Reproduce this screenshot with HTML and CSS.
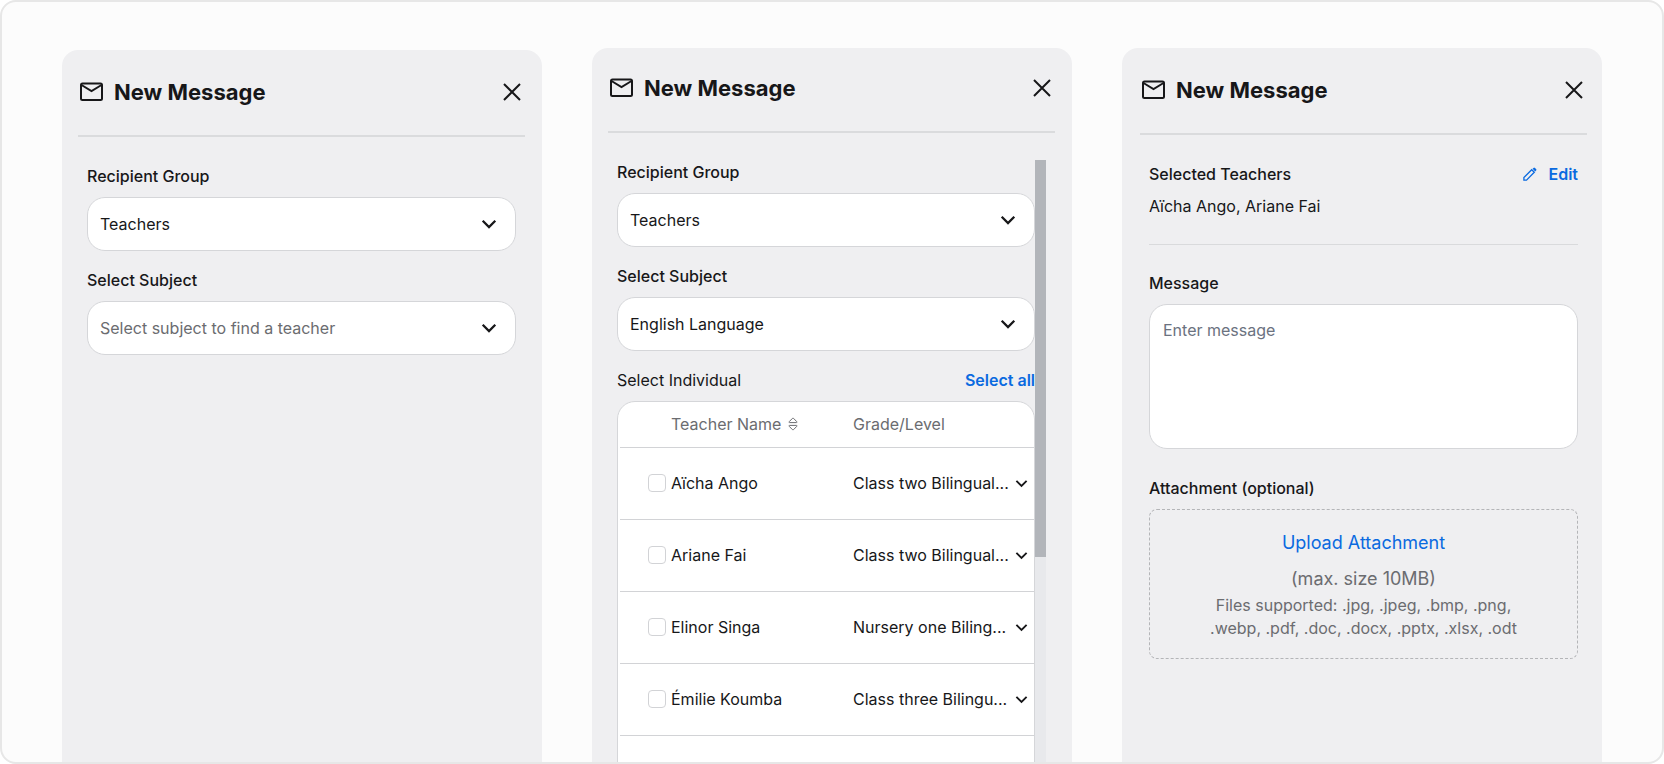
FILE: index.html
```
<!DOCTYPE html>
<html lang="en">
<head>
  <meta charset="UTF-8" />
  <meta name="viewport" content="width=device-width, initial-scale=1.0"/>
  <title>New Message</title>
  <link rel="stylesheet" href="styles.css">
</head>
<body>
  <!-- shared icons -->
  <svg class="sprite" aria-hidden="true">
    <symbol id="mail" viewBox="0 0 24 24">
      <rect x="1.5" y="3.5" width="21" height="16.5" rx="1.5"/>
      <path d="M2 5l10 6 10-6"/>
    </symbol>
    <symbol id="close" viewBox="0 0 18 18"><path d="M1 1l16 16M17 1L1 17"/></symbol>
    <symbol id="chevron" viewBox="0 0 14 14"><path d="M1.5 4.2L7 9.7l5.5-5.5"/></symbol>
    <symbol id="sort" viewBox="0 0 10 14">
      <path d="M1.6 5.6a.5.5 0 0 1-.4-.9L4.4 1.4a.8.8 0 0 1 1.2 0l3.2 3.3a.5.5 0 0 1-.4.9z"/>
      <path d="M1.6 8.4a.5.5 0 0 0-.4.9l3.2 3.3a.8.8 0 0 0 1.2 0l3.2-3.3a.5.5 0 0 0-.4-.9z"/>
    </symbol>
    <symbol id="pencil" viewBox="0 0 14 14">
      <path d="M.9 13.1v-2.6l7.8-7.8 2.6 2.6-7.8 7.8z"/>
      <path class="solid" d="M9.6 1.8l.9-.9a1 1 0 0 1 1.4 0l1.2 1.2a1 1 0 0 1 0 1.4l-.9.9z"/>
    </symbol>
  </svg>

  <main class="frame">
    <section class="panel panel-low">
      <header class="panel-header">
        <svg class="icon-mail"><use href="#mail"/></svg>
        <h2>New Message</h2>
        <button class="close-btn" aria-label="Close"><svg><use href="#close"/></svg></button>
      </header>
      <div class="panel-body">
        <div class="field">
          <label for="group1">Recipient Group</label>
          <div class="select-box">
            <select id="group1"><option>Teachers</option></select>
            <svg><use href="#chevron"/></svg>
          </div>
        </div>
        <div class="field">
          <label for="subject1">Select Subject</label>
          <div class="select-box">
            <select id="subject1" class="empty"><option>Select subject to find a teacher</option></select>
            <svg><use href="#chevron"/></svg>
          </div>
        </div>
      </div>
    </section>

    <section class="panel panel-list">
      <header class="panel-header">
        <svg class="icon-mail"><use href="#mail"/></svg>
        <h2>New Message</h2>
        <button class="close-btn" aria-label="Close"><svg><use href="#close"/></svg></button>
      </header>
      <div class="scroll-area">
        <div class="scroll-content">
          <div class="field">
            <label for="group2">Recipient Group</label>
            <div class="select-box">
              <select id="group2"><option>Teachers</option></select>
              <svg><use href="#chevron"/></svg>
            </div>
          </div>
          <div class="field">
            <label for="subject2">Select Subject</label>
            <div class="select-box">
              <select id="subject2"><option>English Language</option></select>
              <svg><use href="#chevron"/></svg>
            </div>
          </div>
          <div class="list-title">
            <span>Select Individual</span>
            <button class="link-btn">Select all</button>
          </div>
          <div class="table-card">
            <table>
              <thead>
                <tr>
                  <th class="col-check"></th>
                  <th class="col-name">Teacher Name <svg class="icon-sort"><use href="#sort"/></svg></th>
                  <th>Grade/Level</th>
                </tr>
              </thead>
              <tbody>
                <tr>
                  <td class="col-check"><input type="checkbox" id="t1"></td>
                  <td><label for="t1">Aïcha Ango</label></td>
                  <td><button class="grade">Class two Bilingual... <svg><use href="#chevron"/></svg></button></td>
                </tr>
                <tr>
                  <td class="col-check"><input type="checkbox" id="t2"></td>
                  <td><label for="t2">Ariane Fai</label></td>
                  <td><button class="grade">Class two Bilingual... <svg><use href="#chevron"/></svg></button></td>
                </tr>
                <tr>
                  <td class="col-check"><input type="checkbox" id="t3"></td>
                  <td><label for="t3">Elinor Singa</label></td>
                  <td><button class="grade">Nursery one Biling... <svg><use href="#chevron"/></svg></button></td>
                </tr>
                <tr>
                  <td class="col-check"><input type="checkbox" id="t4"></td>
                  <td><label for="t4">Émilie Koumba</label></td>
                  <td><button class="grade">Class three Bilingu... <svg><use href="#chevron"/></svg></button></td>
                </tr>
                <tr>
                  <td class="col-check"><input type="checkbox" aria-label="Select teacher"></td>
                  <td></td>
                  <td></td>
                </tr>
              </tbody>
            </table>
          </div>
        </div>
        <div class="scroll-track"><div class="scroll-thumb"></div></div>
      </div>
    </section>

    <section class="panel panel-compose">
      <header class="panel-header">
        <svg class="icon-mail"><use href="#mail"/></svg>
        <h2>New Message</h2>
        <button class="close-btn" aria-label="Close"><svg><use href="#close"/></svg></button>
      </header>
      <div class="panel-body">
        <div class="selected">
          <div class="selected-title">
            <h3>Selected Teachers</h3>
            <button class="link-btn"><svg class="icon-pencil"><use href="#pencil"/></svg>Edit</button>
          </div>
          <p>Aïcha Ango, Ariane Fai</p>
        </div>
        <div class="field">
          <label for="message">Message</label>
          <textarea id="message" placeholder="Enter message"></textarea>
        </div>
        <div class="field">
          <h3>Attachment (optional)</h3>
          <div class="upload">
            <button class="upload-btn">Upload Attachment</button>
            <p class="upload-size">(max. size 10MB)</p>
            <p class="upload-types">Files supported: .jpg, .jpeg, .bmp, .png, .webp, .pdf, .doc, .docx, .pptx, .xlsx, .odt</p>
          </div>
        </div>
      </div>
    </section>
  </main>
</body>
</html>
```
FILE: styles.css
```
* {
  box-sizing: border-box;
}
body {
  margin: 0;
  background: white;
  color: #171719;
  font-family: Inter, "Liberation Sans", sans-serif;
  font-size: 16px;
  line-height: 24px;
}
h2, h3, p {
  margin: 0;
}
button, select, textarea, input {
  font: inherit;
  color: inherit;
  margin: 0;
}
button {
  background: none;
  border: none;
  padding: 0;
  cursor: pointer;
}
svg {
  fill: none;
  stroke: currentColor;
  stroke-width: 2;
  flex: none;
}
.sprite {
  position: absolute;
  width: 0;
  height: 0;
}
.solid {
  fill: currentColor;
  stroke: none;
}

.frame {
  display: grid;
  grid-template-columns: repeat(3, minmax(0, 1fr));
  gap: 50px;
  height: 100vh;
  padding: 46px 60px 0;
  background: #fcfcfc;
  border: 2px solid #e7e7e7;
  border-radius: 16px;
  overflow: hidden;
}

.panel {
  display: flex;
  flex-direction: column;
  min-height: 0;
  padding: 0 17px 0 16px;
  background: #efeff1;
  border-radius: 16px 16px 0 0;
}
.panel-low {
  margin-top: 2px;
}
.panel-compose {
  padding: 0 15px 0 18px;
}
.panel-header {
  display: flex;
  align-items: center;
  flex: none;
  height: 87px;
  padding: 0 4px 2px 1px;
  border-bottom: 2px solid #dadbdd;
}
.panel-list .panel-header {
  height: 85px;
  padding-bottom: 4px;
}
.panel-header h2 {
  flex: 1;
  margin-left: 10px;
  font-size: 22px;
  font-weight: 700;
  line-height: 32px;
}
.icon-mail {
  width: 25px;
  height: 24px;
}
.close-btn {
  width: 18px;
  height: 18px;
}
.close-btn svg {
  display: block;
  width: 18px;
  height: 18px;
}
.panel-body {
  padding: 27px 9px 0;
}

.field {
  margin-bottom: 17px;
}
.field label, h3 {
  display: block;
  font-size: 16px;
  font-weight: 500;
}
.select-box {
  position: relative;
  margin-top: 9px;
}
.select-box select {
  display: block;
  width: 100%;
  height: 54px;
  padding: 0 44px 0 12px;
  appearance: none;
  background: white;
  border: 1px solid #d5d6d9;
  border-radius: 18px;
}
.select-box select.empty {
  color: #6b6c70;
}
.select-box svg {
  position: absolute;
  top: 19px;
  right: 19px;
  width: 16px;
  height: 16px;
  pointer-events: none;
}

.scroll-area {
  display: flex;
  flex: 1;
  min-height: 0;
  margin-top: 27px;
  padding: 0 9px;
}
.scroll-content {
  flex: 1;
  min-width: 0;
  overflow: hidden;
}
.scroll-track {
  width: 11px;
  background: #e8e9ec;
}
.scroll-thumb {
  height: 66%;
  background: #b2b5ba;
}

.list-title {
  display: flex;
  justify-content: space-between;
  margin-bottom: 9px;
}
.link-btn {
  display: flex;
  align-items: center;
  color: #0a6ae0;
  font-weight: 600;
}
.table-card {
  padding-left: 2px;
  background: white;
  border: 1px solid #d5d6d9;
  border-radius: 18px 18px 0 0;
}
table {
  width: 100%;
  border-collapse: collapse;
  table-layout: fixed;
}
th, td {
  height: 72px;
  padding: 0;
  border-bottom: 1px solid #d2d3d6;
  text-align: left;
}
th {
  height: 45px;
  color: #6b6c70;
  font-weight: 400;
}
.col-check {
  width: 51px;
  padding-left: 28px;
}
.col-name {
  width: 182px;
}
.icon-sort {
  width: 10px;
  height: 14px;
  margin-left: 2px;
  stroke-width: 1;
  vertical-align: -1px;
}
input[type="checkbox"] {
  display: block;
  width: 18px;
  height: 18px;
  appearance: none;
  background: white;
  border: 1px solid #d2d3d6;
  border-radius: 4px;
}
.grade {
  display: flex;
  align-items: center;
  justify-content: space-between;
  width: 100%;
  padding-right: 6px;
}
.grade svg {
  width: 13px;
  height: 13px;
}

.selected {
  margin-bottom: 26px;
  padding-bottom: 26px;
  border-bottom: 1px solid #d9dadc;
}
.selected-title {
  display: flex;
  justify-content: space-between;
  margin-bottom: 8px;
}
.icon-pencil {
  width: 14px;
  height: 14px;
  margin-right: 11px;
  stroke-width: 1.3;
}
textarea {
  display: block;
  width: 100%;
  height: 145px;
  margin-top: 9px;
  padding: 13px;
  background: white;
  border: 1px solid #d5d6d9;
  border-radius: 18px;
  resize: none;
}
textarea::placeholder {
  color: #6b7280;
}
.panel-compose .field {
  margin-bottom: 27px;
}
.upload {
  margin-top: 9px;
  padding: 21px 48px 18px;
  border: 1px dashed #b4b5b8;
  border-radius: 8px;
  color: #6b6c70;
  text-align: center;
}
.upload-btn {
  color: #0a6ae0;
  font-size: 18px;
}
.upload-size {
  margin-top: 12px;
  font-size: 18px;
}
.upload-types {
  margin-top: 3px;
  line-height: 23px;
}
```
